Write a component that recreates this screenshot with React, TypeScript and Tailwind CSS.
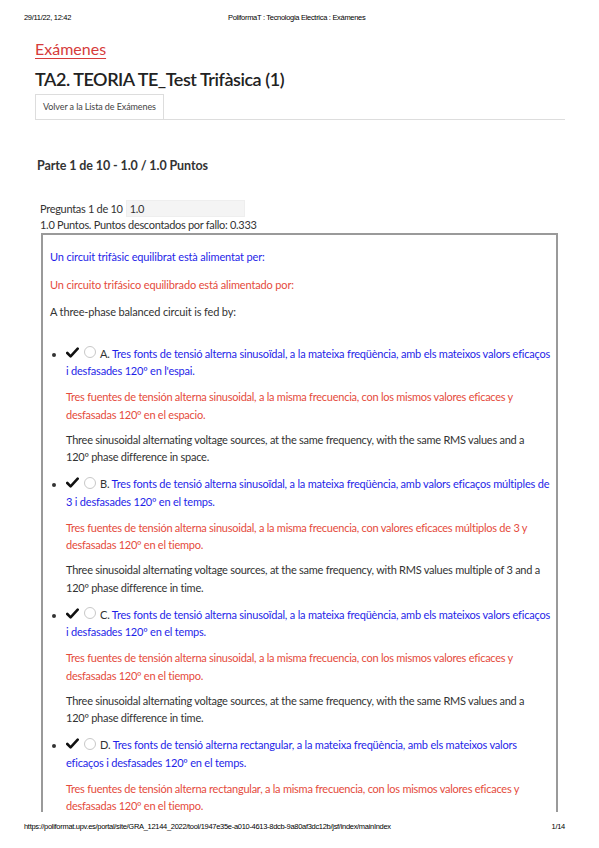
import React from "react";

type Item = { l: string; ca: string[]; es: string[]; en: string[] };

const items: Item[] = [
  {
    l: "A.",
    ca: ["Tres fonts de tensió alterna sinusoïdal, a la mateixa freqüència, amb els mateixos valors eficaços", "i desfasades 120º en l'espai."],
    es: ["Tres fuentes de tensión alterna sinusoidal, a la misma frecuencia, con los mismos valores eficaces y", "desfasadas 120º en el espacio."],
    en: ["Three sinusoidal alternating voltage sources, at the same frequency, with the same RMS values and a", "120º phase difference in space."],
  },
  {
    l: "B.",
    ca: ["Tres fonts de tensió alterna sinusoïdal, a la mateixa freqüència, amb valors eficaços múltiples de", "3 i desfasades 120º en el temps."],
    es: ["Tres fuentes de tensión alterna sinusoidal, a la misma frecuencia, con valores eficaces múltiplos de 3 y", "desfasadas 120º en el tiempo."],
    en: ["Three sinusoidal alternating voltage sources, at the same frequency, with RMS values multiple of 3 and a", "120º phase difference in time."],
  },
  {
    l: "C.",
    ca: ["Tres fonts de tensió alterna sinusoïdal, a la mateixa freqüència, amb els mateixos valors eficaços", "i desfasades 120º en el temps."],
    es: ["Tres fuentes de tensión alterna sinusoidal, a la misma frecuencia, con los mismos valores eficaces y", "desfasadas 120º en el tiempo."],
    en: ["Three sinusoidal alternating voltage sources, at the same frequency, with the same RMS values and a", "120º phase difference in time."],
  },
  {
    l: "D.",
    ca: ["Tres fonts de tensió alterna rectangular, a la mateixa freqüència, amb els mateixos valors", "eficaços i desfasades 120º en el temps."],
    es: ["Tres fuentes de tensión alterna rectangular, a la misma frecuencia, con los mismos valores eficaces y", "desfasadas 120º en el tiempo."],
    en: [],
  },
];

function Check() {
  return (
    <svg width="13" height="11" viewBox="0 0 13 11" className="inline-block align-[-1px]">
      <path d="M1.3 6 L4.6 9.3 L11.7 1.7" fill="none" stroke="#111" strokeWidth="2.6" strokeLinecap="round" strokeLinejoin="round" />
    </svg>
  );
}

function Radio() {
  return (
    <span className="inline-block w-[12px] h-[12px] rounded-full border border-[#c8c8c8] bg-white align-[-1px]" />
  );
}

function Lines({ lines }: { lines: string[] }) {
  return (
    <>
      {lines.map((t, i) => (
        <React.Fragment key={i}>
          {i > 0 && <br />}
          {t}
        </React.Fragment>
      ))}
    </>
  );
}

export default function App() {
  return (
    <div className="w-[599px] h-[848px] bg-white relative overflow-hidden text-[#333]" style={{ fontFamily: "Lato, 'Open Sans', sans-serif" }}>
      <div className="flex items-center h-[36px] px-[24px] text-[7.5px] text-black tracking-[-0.3px]" style={{ fontFamily: "'Liberation Sans', Arial, sans-serif" }}>
        <span className="w-[204px]">29/11/22, 12:42</span>
        <span>PoliformaT : Tecnologia Electrica : Exámenes</span>
      </div>

      <div className="pl-[35px] pr-[34px]">
        <div className="mt-[2px] text-[16px] leading-[22px] text-[#d63b3b] underline underline-offset-[3px]">Exámenes</div>
        <div className="mt-[7px] text-[18px] leading-[24px] font-semibold text-[#222] tracking-[-0.45px]">TA2. TEORIA TE_Test Trifàsica (1)</div>
        <div className="mt-[3px] flex border-b border-[#ddd]">
          <div className="h-[25px] px-[7px] flex items-center border border-b-0 border-[#ddd] text-[9px] text-[#444] tracking-[-0.1px]">Volver a la Lista de Exámenes</div>
        </div>

        <div className="mt-[38px] ml-[2px] text-[12.5px] leading-[16px] font-bold text-[#333] tracking-[-0.1px]">Parte 1 de 10 - 1.0 / 1.0 Puntos</div>

        <div className="mt-[26px] ml-[5px] text-[11px] leading-[16px] tracking-[-0.3px]">
          <div className="flex items-center">
            <span>Preguntas 1 de 10</span>
            <span className="ml-[3px] w-[119px] h-[17px] bg-[#f4f4f4] border border-[#eee] pl-[3px] flex items-center">1.0</span>
          </div>
          <div>1.0 Puntos. Puntos descontados por fallo: 0.333</div>
        </div>

        <div className="ml-[6px] w-[517px] h-[600px] border-2 border-[#9a9a9a] px-[7px] pt-[13px] text-[11px] leading-[17.5px] tracking-[-0.15px] whitespace-nowrap">
          <p className="text-[#1f1fe8]">Un circuit trifàsic equilibrat està alimentat per:</p>
          <p className="mt-[10px] text-[#e54b3c]">Un circuito trifásico equilibrado está alimentado por:</p>
          <p className="mt-[10px] text-[#333]">A three-phase balanced circuit is fed by:</p>
          <ul className="mt-[24px] pl-[16px] list-disc">
            {items.map((it, i) => (
              <li key={i} className={i > 0 ? "mt-[9.5px]" : ""}>
                <div className="tracking-[-0.2px]">
                  <span className="inline-flex items-center gap-[5px] mr-[4px]">
                    <Check />
                    <Radio />
                  </span>
                  <span className="text-[#333]">{it.l} </span>
                  <span className="text-[#1f1fe8]"><Lines lines={it.ca} /></span>
                </div>
                <p className="mt-[8.5px] text-[#e54b3c] tracking-[-0.25px]"><Lines lines={it.es} /></p>
                {it.en.length > 0 && (
                  <p className="mt-[7.5px] text-[#333] tracking-[-0.25px]"><Lines lines={it.en} /></p>
                )}
              </li>
            ))}
          </ul>
        </div>
      </div>

      <div className="absolute left-0 right-0 top-[812px] h-[36px] bg-white flex items-start pt-[9px] px-[24px] text-[7.5px] text-black tracking-[-0.3px]" style={{ fontFamily: "'Liberation Sans', Arial, sans-serif" }}>
        <span className="flex-1">https://poliformat.upv.es/portal/site/GRA_12144_2022/tool/1947e35e-a010-4613-8dcb-9a80af3dc12b/jsf/index/mainIndex</span>
        <span className="mr-[10px]">1/14</span>
      </div>
    </div>
  );
}
